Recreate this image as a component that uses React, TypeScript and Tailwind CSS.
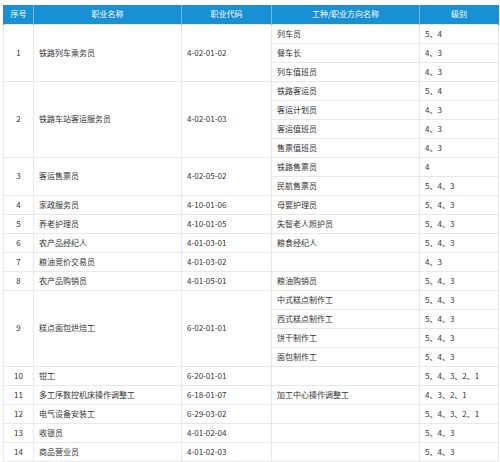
import React from "react";

type Group = {
  no: string;
  name: string;
  code: string;
  subs: { type: string; level: string }[];
};

const rows: Group[] = [
  {
    no: "1",
    name: "铁路列车乘务员",
    code: "4-02-01-02",
    subs: [
      { type: "列车员", level: "5、4" },
      { type: "餐车长", level: "4、3" },
      { type: "列车值班员", level: "4、3" },
    ],
  },
  {
    no: "2",
    name: "铁路车站客运服务员",
    code: "4-02-01-03",
    subs: [
      { type: "铁路客运员", level: "5、4" },
      { type: "客运计划员", level: "4、3" },
      { type: "客运值班员", level: "4、3" },
      { type: "售票值班员", level: "4、3" },
    ],
  },
  {
    no: "3",
    name: "客运售票员",
    code: "4-02-05-02",
    subs: [
      { type: "铁路售票员", level: "4" },
      { type: "民航售票员", level: "5、4、3" },
    ],
  },
  { no: "4", name: "家政服务员", code: "4-10-01-06", subs: [{ type: "母婴护理员", level: "5、4、3" }] },
  { no: "5", name: "养老护理员", code: "4-10-01-05", subs: [{ type: "失智老人照护员", level: "5、4、3" }] },
  { no: "6", name: "农产品经纪人", code: "4-01-03-01", subs: [{ type: "粮食经纪人", level: "5、4、3" }] },
  { no: "7", name: "粮油竞价交易员", code: "4-01-03-02", subs: [{ type: "", level: "4、3" }] },
  { no: "8", name: "农产品购销员", code: "4-01-05-01", subs: [{ type: "粮油购销员", level: "5、4、3" }] },
  {
    no: "9",
    name: "糕点面包烘焙工",
    code: "6-02-01-01",
    subs: [
      { type: "中式糕点制作工", level: "5、4、3" },
      { type: "西式糕点制作工", level: "5、4、3" },
      { type: "饼干制作工", level: "5、4、3" },
      { type: "面包制作工", level: "5、4、3" },
    ],
  },
  { no: "10", name: "钳工", code: "6-20-01-01", subs: [{ type: "", level: "5、4、3、2、1" }] },
  { no: "11", name: "多工序数控机床操作调整工", code: "6-18-01-07", subs: [{ type: "加工中心操作调整工", level: "4、3、2、1" }] },
  { no: "12", name: "电气设备安装工", code: "6-29-03-02", subs: [{ type: "", level: "5、4、3、2、1" }] },
  { no: "13", name: "收银员", code: "4-01-02-04", subs: [{ type: "", level: "5、4、3" }] },
  { no: "14", name: "商品营业员", code: "4-01-02-03", subs: [{ type: "", level: "5、4、3" }] },
];

const td = "border border-[#e8e8e8] px-[5px] h-[19px] p-0 leading-none align-middle";

export default function App() {
  return (
    <div
      className="w-[500px] h-[462px] overflow-hidden bg-white pt-[5px] pl-[3px] text-[8px] text-[#333]"
      style={{ fontFamily: '"Microsoft YaHei", "Noto Sans CJK SC", sans-serif' }}
    >
      <table className="w-[495px] table-fixed border-collapse">
        <colgroup>
          <col className="w-[30px]" />
          <col className="w-[148px]" />
          <col className="w-[90px]" />
          <col className="w-[148px]" />
          <col className="w-[79px]" />
        </colgroup>
        <thead>
          <tr className="bg-[#1890d6] text-white">
            {["序号", "职业名称", "职业代码", "工种/职业方向名称", "级别"].map((h) => (
              <th
                key={h}
                className="h-[19px] p-0 font-normal text-center leading-none border-x border-[#6fb8e6] first:border-l-[#1890d6] last:border-r-[#1890d6]"
              >
                {h}
              </th>
            ))}
          </tr>
        </thead>
        <tbody>
          {rows.map((g) =>
            g.subs.map((s, i) => (
              <tr key={g.no + "-" + i}>
                {i === 0 && (
                  <>
                    <td rowSpan={g.subs.length} className={td + " text-center"}>
                      {g.no}
                    </td>
                    <td rowSpan={g.subs.length} className={td}>
                      {g.name}
                    </td>
                    <td rowSpan={g.subs.length} className={td}>
                      {g.code}
                    </td>
                  </>
                )}
                <td className={td}>{s.type}</td>
                <td className={td}>{s.level}</td>
              </tr>
            ))
          )}
        </tbody>
      </table>
    </div>
  );
}
